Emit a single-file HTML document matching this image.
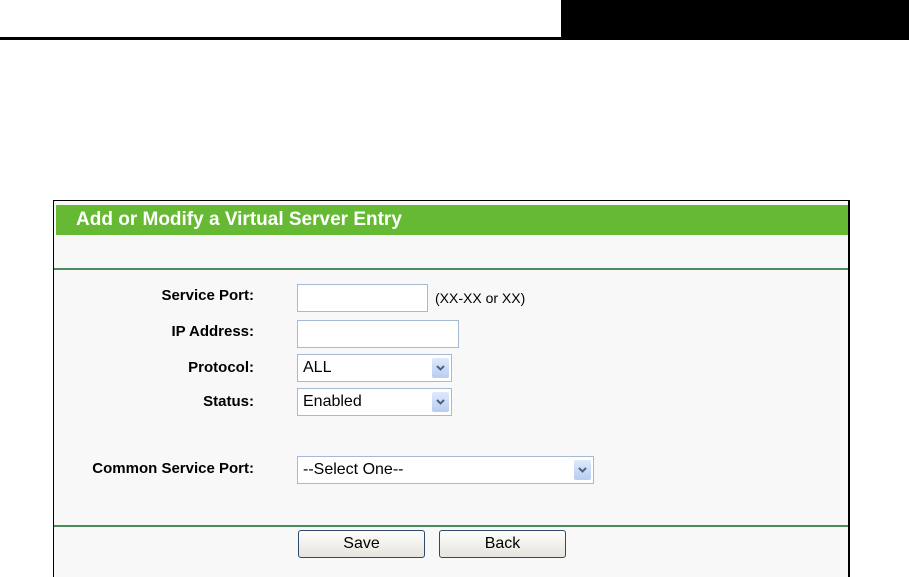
<!DOCTYPE html>
<html><head><meta charset="utf-8"><style>
*{margin:0;padding:0;box-sizing:border-box}
body{width:909px;height:577px;background:#fff;position:relative;overflow:hidden;font-family:"Liberation Sans",Arial,sans-serif}
.a{position:absolute}
.lbl{position:absolute;right:655px;font-weight:bold;font-size:15px;color:#000;text-align:right;white-space:nowrap}
.inp{position:absolute;background:#fff;border:1px solid #a5b9d0}
.sel{position:absolute;background:#fff;border:1px solid #a5b9d0;font-size:16px;padding-left:5px;line-height:26px}
.arr{position:absolute;right:2px;top:3px;width:17px;height:20px;background:linear-gradient(#dfe9fb,#b8cdf2);border-radius:2px}
.btn{position:absolute;border:1px solid #2d4a6a;border-radius:3px;background:linear-gradient(#fdfdfc,#e6e4dc);font-size:16px;text-align:center;line-height:25px}
</style></head><body>
<div class="a" style="left:561px;top:0;width:348px;height:40px;background:#000"></div>
<div class="a" style="left:0;top:37px;width:561px;height:3px;background:#000"></div>
<div class="a" style="left:53px;top:200px;width:797px;height:377px;border:1px solid #000;border-right-width:2px;border-bottom:none;background:#f8f8f8"></div>
<div class="a" style="left:56px;top:205px;width:792px;height:30px;background:#66b933;color:#fff;font-weight:bold;font-size:19px;line-height:30px;padding-left:20px">Add or Modify a Virtual Server Entry</div>
<div class="a" style="left:54px;top:268px;width:794px;height:2px;background:#4b8b5e"></div>
<div class="a" style="left:54px;top:525px;width:794px;height:2px;background:#4b8b5e"></div>
<div class="lbl" style="top:287px">Service Port:</div>
<div class="lbl" style="top:323px">IP Address:</div>
<div class="lbl" style="top:359px">Protocol:</div>
<div class="lbl" style="top:393px">Status:</div>
<div class="lbl" style="top:460px">Common Service Port:</div>
<div class="inp" style="left:297px;top:284px;width:131px;height:28px"></div>
<div class="a" style="left:435px;top:290px;font-size:14px">(XX-XX or XX)</div>
<div class="inp" style="left:297px;top:320px;width:162px;height:28px"></div>
<div class="sel" style="left:297px;top:354px;width:155px;height:28px">ALL<div class="arr"><svg width="17" height="20"><path d="M5 8l3.5 3.5L12 8" stroke="#4d6185" stroke-width="2" fill="none"/></svg></div></div>
<div class="sel" style="left:297px;top:388px;width:155px;height:28px">Enabled<div class="arr"><svg width="17" height="20"><path d="M5 8l3.5 3.5L12 8" stroke="#4d6185" stroke-width="2" fill="none"/></svg></div></div>
<div class="sel" style="left:297px;top:456px;width:297px;height:28px">--Select One--<div class="arr"><svg width="17" height="20"><path d="M5 8l3.5 3.5L12 8" stroke="#4d6185" stroke-width="2" fill="none"/></svg></div></div>
<div class="btn" style="left:298px;top:530px;width:127px;height:28px">Save</div>
<div class="btn" style="left:439px;top:530px;width:127px;height:28px">Back</div>
</body></html>
